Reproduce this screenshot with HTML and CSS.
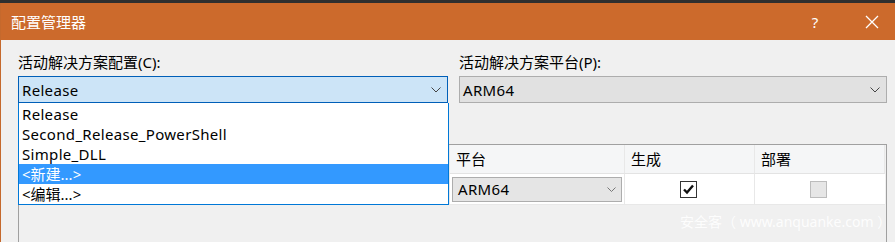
FILE: index.html
```html
<!DOCTYPE html>
<html lang="zh">
<head>
<meta charset="utf-8">
<link rel="stylesheet" href="styles.css">
</head>
<body>
<div class="window">
  <div class="topbar"></div>
  <div class="titlebar">
    <span class="title">配置管理器</span>
    <span class="tb-btn help">?</span>
    <span class="tb-btn close">
      <svg width="16" height="16" viewBox="0 0 16 16"><path d="M2 2 L14 14 M14 2 L2 14" stroke="#fff" stroke-width="1.3" fill="none"/></svg>
    </span>
  </div>
  <div class="content">
    <div class="selectors">
      <div class="field">
        <div class="label">活动解决方案配置(C):</div>
        <div class="select active">
          <span class="latin">Release</span>
          <svg class="chev" width="10" height="6" viewBox="0 0 10 6"><path d="M0.5 0.5 L5 5 L9.5 0.5" stroke="#444" stroke-width="1" fill="none"/></svg>
        </div>
      </div>
      <div class="field">
        <div class="label">活动解决方案平台(P):</div>
        <div class="select">
          <span class="latin">ARM64</span>
          <svg class="chev" width="10" height="6" viewBox="0 0 10 6"><path d="M0.5 0.5 L5 5 L9.5 0.5" stroke="#444" stroke-width="1" fill="none"/></svg>
        </div>
      </div>
    </div>
    <div class="panel">
      <div class="grid">
        <div class="hcell first"></div>
        <div class="hcell">平台</div>
        <div class="hcell">生成</div>
        <div class="hcell">部署</div>
        <div class="cell first"></div>
        <div class="cell">
          <div class="mini-select">
            <span class="latin">ARM64</span>
            <svg class="chev" width="9" height="5" viewBox="0 0 9 5"><path d="M0.5 0.5 L4.5 4.5 L8.5 0.5" stroke="#777" stroke-width="1" fill="none"/></svg>
          </div>
        </div>
        <div class="cell center">
          <span class="check on">
            <svg width="15" height="15" viewBox="0 0 15 15"><path d="M3 7.5 L6 10.5 L12 3.5" stroke="#111" stroke-width="2.4" fill="none"/></svg>
          </span>
        </div>
        <div class="cell center"><span class="check off"></span></div>
      </div>
    </div>
    <ul class="droplist">
      <li class="latin">Release</li>
      <li class="latin">Second_Release_PowerShell</li>
      <li class="latin">Simple_DLL</li>
      <li class="hl">&lt;新建...&gt;</li>
      <li>&lt;编辑...&gt;</li>
    </ul>
    <div class="watermark">安全客（ www.anquanke.com ）</div>
  </div>
</div>
</body>
</html>
```
FILE: styles.css
```css
* { box-sizing: border-box; }
html, body { margin: 0; padding: 0; }
body {
  width: 895px;
  height: 242px;
  overflow: hidden;
  background: #f0f0f0;
  font-family: "Noto Sans", "Noto Sans CJK SC", sans-serif;
  font-size: 15px;
  color: #000;
}
.latin { letter-spacing: 0.32px; }
.window {
  height: 242px;
  border-left: 1px solid #c5692d;
  display: flex;
  flex-direction: column;
}
.topbar { height: 3px; background: #2f2f2f; margin-left: -1px; }
.titlebar {
  height: 37px;
  background: #cc6a2c;
  color: #fff;
  display: flex;
  align-items: center;
  padding-left: 10px;
}
.title { font-size: 15px; flex: 1; }
.tb-btn { display: flex; align-items: center; justify-content: center; }
.help { width: 16px; font-size: 15px; margin-right: 41px; }
.close { width: 16px; margin-right: 15px; }
.content {
  position: relative;
  flex: 1;
  padding: 12px 8px 0 17px;
  display: flex;
  flex-direction: column;
}
.selectors {
  display: grid;
  grid-template-columns: 430px 428px;
  column-gap: 11px;
}
.label { height: 20px; line-height: 20px; margin-bottom: 4px; }
.select {
  height: 27px;
  border: 1px solid #adadad;
  background: #e1e1e1;
  display: flex;
  align-items: center;
  justify-content: space-between;
  padding: 0 6px 0 3px;
}
.select.active { background: #cce4f7; border-color: #005fb8; }
.panel {
  margin-top: 41px;
  flex: 1;
  border: 1px solid #a0a0a0;
  border-bottom: none;
  width: 869px;
}
.grid {
  display: grid;
  grid-template-columns: 431px 175px 130px 130px;
}
.hcell {
  height: 29px;
  background: #f5f6f7;
  border-bottom: 1px solid #e3e3e3;
  border-right: 1px solid #e8e8e8;
  padding-left: 6px;
  line-height: 28px;
}
.cell {
  height: 31px;
  background: #fff;
  border-right: 1px solid #e8e8e8;
  border-bottom: 1px solid #e8e8e8;
  display: flex;
  align-items: center;
}
.hcell:last-child, .cell:last-child { border-right: none; }
.cell.center { justify-content: center; }
.mini-select {
  margin-left: 2px;
  width: 170px;
  height: 25px;
  border: 1px solid #adadad;
  background: #e5e5e5;
  display: flex;
  align-items: center;
  justify-content: space-between;
  padding: 0 5px 0 5px;
}
.check {
  width: 17px;
  height: 17px;
  display: flex;
  align-items: center;
  justify-content: center;
}
.check.on { border: 1px solid #333; background: #fff; margin-left: -3px; }
.check.off { border: 1px solid #bcbcbc; background: #e6e6e6; margin-left: -3px; }
.droplist {
  position: absolute;
  left: 17px;
  top: 63px;
  width: 431px;
  height: 102px;
  margin: 0;
  padding: 1px 0 0 0;
  list-style: none;
  background: #fff;
  border: 1px solid #0078d7;
  border-top: none;
}
.droplist li { height: 20px; line-height: 20px; padding-left: 3px; }
.droplist li.hl { background: #3399ff; color: #fff; }
.watermark {
  position: absolute;
  left: 679px;
  top: 171px;
  color: #fff;
  font-size: 14px;
  white-space: nowrap;
  opacity: 0.9;
}
```
